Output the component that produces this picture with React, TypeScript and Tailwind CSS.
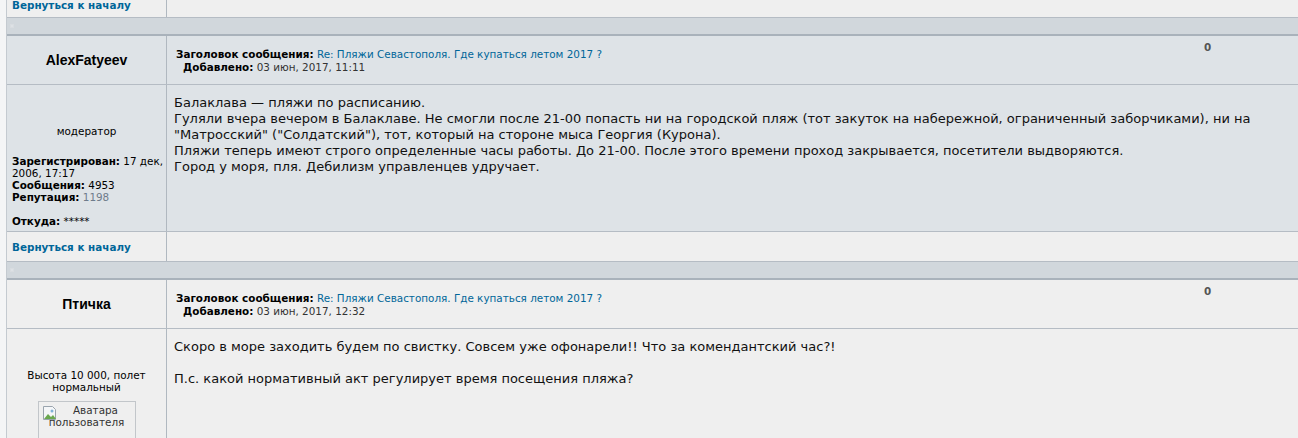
import React from "react";

const LINK = "text-[#006699]";

function BackRow({ first }: { first?: boolean }) {
  return (
    <div className={`flex h-[30px] border-b border-[#B5BCC4] bg-[#EFEFEF] ${first ? "-mt-[12px] pt-[4px]" : ""}`}>
      <div className="w-[160px] shrink-0 border-r border-[#B0B8C0] flex items-center pl-[5px]">
        <span className={`font-bold text-[10.4px] leading-[12px] ${LINK}`}>Вернуться к началу</span>
      </div>
      <div className="flex-1" />
    </div>
  );
}

function SepRow() {
  return (
    <div>
      <div className="h-[16px] bg-[#D1D7DC] flex items-center pl-[3px]">
        <div className="w-[4px] h-[4px] bg-[#DDE1E5] border border-[#D8DCE0]" />
      </div>
      <div className="h-[2px] bg-[#A9B2BB]" />
    </div>
  );
}

function HeaderRow({ name, date, bg }: { name: string; date: string; bg: string }) {
  return (
    <div className={`flex h-[49px] border-b border-[#B5BCC4] ${bg}`}>
      <div className="w-[160px] shrink-0 border-r border-[#B0B8C0] flex items-center justify-center">
        <span className="font-['Liberation_Sans',Arial,sans-serif] font-bold text-[14px] text-black">{name}</span>
      </div>
      <div className="flex-1 flex">
        <div className="flex-1 pl-[9px] pt-[12px] text-[10.4px] leading-[13px] text-[#333]">
          <div className="whitespace-nowrap">
            <b className="text-black">Заголовок сообщения:</b>{" "}
            <span className={LINK}>Re: Пляжи Севастополя. Где купаться летом 2017 ?</span>
          </div>
          <div className="whitespace-nowrap pl-[7px]">
            <b className="text-black">Добавлено:</b> {date}
          </div>
        </div>
        <div className="w-[94px] shrink-0 pt-[5px] text-[10.4px] leading-[12px] font-bold text-[#555]">0</div>
      </div>
    </div>
  );
}

export default function App() {
  return (
    <div className="w-[1298px] h-[438px] overflow-hidden bg-[#F4F5F6] pl-[6px] font-['DejaVu_Sans',Verdana,sans-serif] text-black">
      <div className="border-l border-[#C4CAD0]">
        <BackRow first />
        <SepRow />
        <HeaderRow name="AlexFatyeev" date="03 июн, 2017, 11:11" bg="bg-[#DEE3E7]" />
        {/* body 1 */}
        <div className="flex h-[147px] border-b border-[#B5BCC4] bg-[#DEE3E7]">
          <div className="w-[160px] shrink-0 border-r border-[#B0B8C0] pt-[40px] pl-[5px] text-[10.4px] leading-[12px]">
            <div className="text-center pr-[5px]">модератор</div>
            <div className="mt-[18px] whitespace-nowrap">
              <div><b>Зарегистрирован:</b> 17 дек,</div>
              <div>2006, 17:17</div>
              <div><b>Сообщения:</b> 4953</div>
              <div><b>Репутация:</b> <span className="text-[#6E7B8B]">1198</span></div>
              <div className="h-[12px]" />
              <div><b>Откуда:</b> *****</div>
            </div>
          </div>
          <div className="flex-1 pl-[7px] pt-[10px] text-[13px] leading-[16px] text-[#111]">
            <div className="whitespace-nowrap">Балаклава — пляжи по расписанию.</div>
            <div className="whitespace-nowrap">Гуляли вчера вечером в Балаклаве. Не смогли после 21-00 попасть ни на городской пляж (тот закуток на набережной, ограниченный заборчиками), ни на</div>
            <div className="whitespace-nowrap">"Матросский" ("Солдатский"), тот, который на стороне мыса Георгия (Курона).</div>
            <div className="whitespace-nowrap">Пляжи теперь имеют строго определенные часы работы. До 21-00. После этого времени проход закрывается, посетители выдворяются.</div>
            <div className="whitespace-nowrap">Город у моря, пля. Дебилизм управленцев удручает.</div>
          </div>
        </div>
        <BackRow />
        <SepRow />
        <HeaderRow name="Птичка" date="03 июн, 2017, 12:32" bg="bg-[#EFEFEF]" />
        {/* body 2 */}
        <div className="flex h-[160px] bg-[#EFEFEF]">
          <div className="w-[160px] shrink-0 border-r border-[#B0B8C0] pt-[40px] text-[10.4px] leading-[12px] flex flex-col items-center">
            <div className="text-center">Высота 10 000, полет<br />нормальный</div>
            <div className="mt-[8px] w-[98px] h-[100px] border border-[#C2C6CA] relative pt-[2px]">
              <svg className="absolute left-[3px] top-[3px]" width="16" height="16" viewBox="0 0 16 16">
                <path d="M1.5 1.5h9l3 3v10h-12z" fill="#f4f6f8" stroke="#9aa4ae" />
                <path d="M2 14l4-5 3 3 2-2 3 4z" fill="#6aa84f" />
                <circle cx="10" cy="6" r="1.5" fill="#7fb2d9" />
              </svg>
              <div className="text-center text-[#333] pl-[18px] leading-[12px]">Аватара</div>
              <div className="text-center text-[#333] leading-[12px]">пользователя</div>
            </div>
          </div>
          <div className="flex-1 pl-[7px] pt-[10px] text-[13px] leading-[16px] text-[#111]">
            <div className="whitespace-nowrap">Скоро в море заходить будем по свистку. Совсем уже офонарели!! Что за комендантский час?!</div>
            <div className="h-[16px]" />
            <div className="whitespace-nowrap">П.с. какой нормативный акт регулирует время посещения пляжа?</div>
          </div>
        </div>
      </div>
    </div>
  );
}
